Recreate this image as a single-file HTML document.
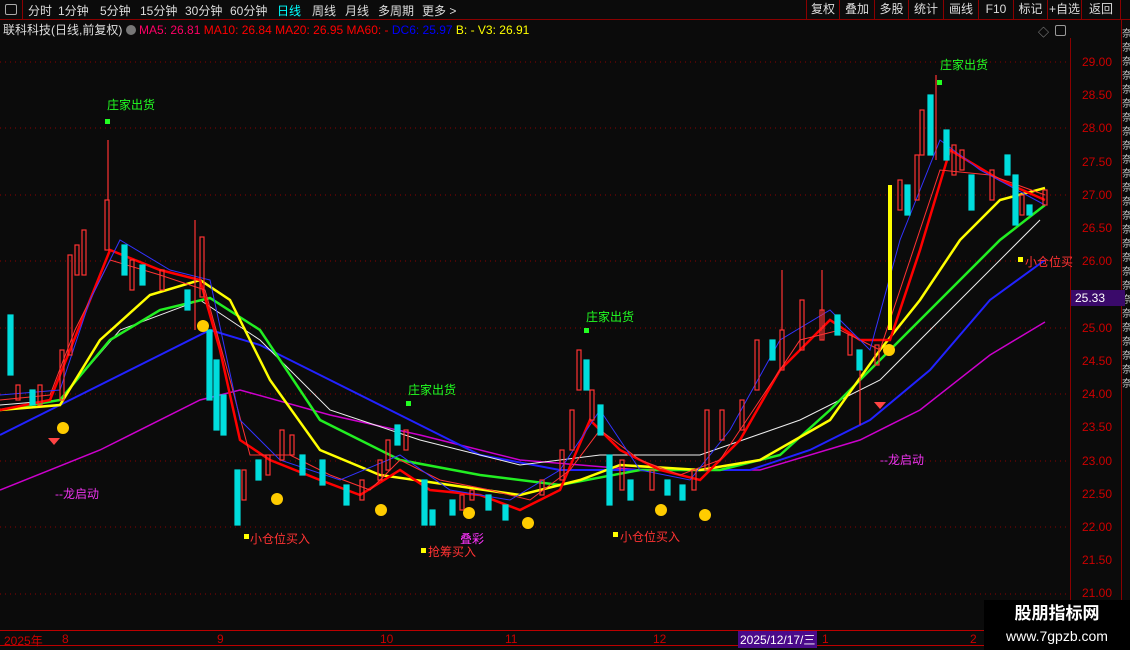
<!DOCTYPE html><html><head><meta charset="utf-8"><style>
body{margin:0;width:1130px;height:650px;background:#0b0b0b;overflow:hidden;font-family:"Liberation Sans","Noto Sans CJK SC",sans-serif;position:relative}
.top{position:absolute;left:0;top:0;width:1130px;height:19px;border-bottom:1px solid #8b0000;color:#ddd;font-size:12px}
.top span{position:absolute;top:2px}
.rb{position:absolute;top:0;height:19px;border-left:1px solid #8b0000;color:#ddd;font-size:12px;text-align:center;line-height:19px;white-space:nowrap}
.info{position:absolute;top:21px;left:3px;font-size:12px;color:#ddd;white-space:nowrap}
.ax{position:absolute;left:1070px;top:38px;width:1px;height:592px;background:#8b0000}
.p{position:absolute;left:1082px;color:#c00;font-size:12px}
.lbl{position:absolute;font-size:12px;white-space:nowrap}
.xl{position:absolute;top:632px;color:#c00;font-size:12px}
</style></head><body>
<div class="top">
<div style="position:absolute;left:0;top:0;width:22px;height:19px;border-right:1px solid #8b0000"><div style="position:absolute;left:5px;top:4px;width:10px;height:9px;border:1px solid #aaa;border-radius:2px"></div></div>
<span style="left:28px">分时</span><span style="left:58px">1分钟</span><span style="left:100px">5分钟</span><span style="left:140px">15分钟</span><span style="left:185px">30分钟</span><span style="left:230px">60分钟</span><span style="left:277px;color:#0ff">日线</span><span style="left:312px">周线</span><span style="left:345px">月线</span><span style="left:378px">多周期</span><span style="left:422px">更多 &gt;</span>
</div>
<div class="rb" style="left:806px;width:32px">复权</div><div class="rb" style="left:839px;width:34px">叠加</div><div class="rb" style="left:874px;width:33px">多股</div><div class="rb" style="left:908px;width:34px">统计</div><div class="rb" style="left:943px;width:34px">画线</div><div class="rb" style="left:978px;width:34px">F10</div><div class="rb" style="left:1013px;width:33px">标记</div><div class="rb" style="left:1047px;width:33px">+自选</div><div class="rb" style="left:1081px;width:38px;border-right:1px solid #8b0000">返回</div>
<div class="info">联科科技(日线,前复权) <span style="display:inline-block;width:10px;height:10px;border-radius:50%;background:#777;vertical-align:-1px"></span> <span style="color:#f06">MA5: 26.81</span> <span style="color:#f00">MA10: 26.84</span> <span style="color:#f00">MA20: 26.95</span> <span style="color:#f00">MA60: -</span> <span style="color:#00f">DC6: 25.97</span> <span style="color:#ff0">B: - V3: 26.91</span></div>
<div style="position:absolute;left:1038px;top:24px;color:#999;font-size:11px">◇</div>
<div style="position:absolute;left:1055px;top:25px;width:9px;height:9px;border:1px solid #999;border-radius:2px"></div>
<div class="ax"></div>
<div style="position:absolute;left:1121px;top:19px;width:1px;height:611px;background:#8b0000"></div>
<div style="position:absolute;left:1122px;top:28px;width:8px;height:400px;color:#ccc;font-size:10px;line-height:14px;overflow:hidden">奈奈奈奈奈奈奈奈奈奈奈奈奈奈奈奈奈奈奈奈奈奈奈奈奈奈</div>
<div class="p" style="top:55px">29.00</div><div class="p" style="top:88px">28.50</div><div class="p" style="top:121px">28.00</div><div class="p" style="top:155px">27.50</div><div class="p" style="top:188px">27.00</div><div class="p" style="top:221px">26.50</div><div class="p" style="top:254px">26.00</div><div class="p" style="top:321px">25.00</div><div class="p" style="top:354px">24.50</div><div class="p" style="top:387px">24.00</div><div class="p" style="top:420px">23.50</div><div class="p" style="top:454px">23.00</div><div class="p" style="top:487px">22.50</div><div class="p" style="top:520px">22.00</div><div class="p" style="top:553px">21.50</div><div class="p" style="top:586px">21.00</div>
<div style="position:absolute;left:1071px;top:290px;width:50px;height:16px;background:#3a0a6a;color:#fff;font-size:12px;line-height:16px;padding-left:4px">25.33</div>
<svg width="1070" height="650" style="position:absolute;left:0;top:0" fill="none">
<g stroke="#8b0000" stroke-dasharray="1 4"><line x1="0" y1="62" x2="1070" y2="62"/><line x1="0" y1="128" x2="1070" y2="128"/><line x1="0" y1="195" x2="1070" y2="195"/><line x1="0" y1="261" x2="1070" y2="261"/><line x1="0" y1="328" x2="1070" y2="328"/><line x1="0" y1="394" x2="1070" y2="394"/><line x1="0" y1="461" x2="1070" y2="461"/><line x1="0" y1="527" x2="1070" y2="527"/><line x1="0" y1="594" x2="1070" y2="594"/></g>
<g stroke-width="1.5">
<polyline stroke="#c0c" points="0,490 100,450 200,400 240,390 330,415 420,435 520,460 640,470 760,470 860,440 920,410 990,355 1045,322"/>
<polyline stroke="#22f" stroke-width="2" points="0,435 60,405 110,380 160,355 210,330 260,345 330,380 410,420 480,455 560,470 650,470 750,470 810,450 870,420 930,370 990,300 1045,260"/>
<polyline stroke="#eee" stroke-width="1" points="0,405 60,400 120,330 200,300 260,340 330,410 420,440 520,465 600,455 700,455 800,420 880,380 960,300 1040,220"/>
<polyline stroke="#2e2" stroke-width="2.5" points="0,410 60,400 110,340 160,310 210,298 260,330 320,420 400,460 480,475 560,485 640,470 720,470 780,455 830,410 880,360 940,300 1000,240 1045,205"/>
<polyline stroke="#ff0" stroke-width="2.5" points="0,410 60,405 100,340 150,295 200,280 230,300 270,380 320,450 380,475 450,485 520,495 580,480 620,465 700,470 760,460 830,420 880,350 920,300 960,240 1000,200 1045,188"/>
<polyline stroke="#f00" stroke-width="2.5" points="0,410 50,400 70,350 110,250 160,270 200,280 220,350 240,440 270,460 320,480 360,495 400,470 430,490 480,495 520,510 560,490 590,420 620,450 660,470 700,480 740,440 780,370 830,320 860,340 890,340 920,250 950,150 1000,180 1045,200"/>
<polyline stroke="#f33" stroke-width="1" points="0,400 50,395 75,330 110,260 160,275 205,290 230,380 250,455 290,455 330,475 370,490 400,460 440,480 490,490 530,500 570,470 600,430 640,460 680,475 720,460 760,400 800,340 840,330 880,350 910,260 940,170 990,175 1045,195"/>
<polyline stroke="#33f" stroke-width="1" points="0,395 60,390 90,300 120,240 170,270 210,280 240,420 280,460 340,480 400,455 450,490 510,500 560,470 600,410 640,470 690,480 730,430 780,340 830,310 870,350 900,240 940,140 980,170 1045,205"/>
<line x1="890" y1="185" x2="890" y2="330" stroke="#ff0" stroke-width="4"/>
</g>
<g stroke-width="1.2">
<g fill="#0dd" stroke="#0dd">
<rect x="8" y="315" width="5" height="60"/><rect x="30" y="390" width="5" height="15"/><rect x="122" y="245" width="5" height="30"/><rect x="140" y="265" width="5" height="20"/><rect x="185" y="290" width="5" height="20"/><rect x="207" y="330" width="5" height="70"/><rect x="214" y="360" width="5" height="70"/><rect x="221" y="395" width="5" height="40"/><rect x="235" y="470" width="5" height="55"/><rect x="256" y="460" width="5" height="20"/><rect x="300" y="455" width="5" height="20"/><rect x="320" y="460" width="5" height="25"/><rect x="344" y="485" width="5" height="20"/><rect x="395" y="425" width="5" height="20"/><rect x="422" y="480" width="5" height="45"/><rect x="430" y="510" width="5" height="15"/><rect x="450" y="500" width="5" height="15"/><rect x="486" y="495" width="5" height="15"/><rect x="503" y="505" width="5" height="15"/><rect x="584" y="360" width="5" height="30"/><rect x="598" y="405" width="5" height="30"/><rect x="607" y="455" width="5" height="50"/><rect x="628" y="480" width="5" height="20"/><rect x="665" y="480" width="5" height="15"/><rect x="680" y="485" width="5" height="15"/><rect x="770" y="340" width="5" height="20"/><rect x="835" y="315" width="5" height="20"/><rect x="857" y="350" width="5" height="20"/><rect x="905" y="185" width="5" height="30"/><rect x="928" y="95" width="5" height="60"/><rect x="944" y="130" width="5" height="30"/><rect x="969" y="175" width="5" height="35"/><rect x="1005" y="155" width="5" height="20"/><rect x="1013" y="175" width="5" height="50"/><rect x="1027" y="205" width="5" height="10"/>
</g>
<g stroke="#f33">
<rect x="16" y="385" width="4" height="15"/><rect x="38" y="385" width="4" height="20"/><rect x="60" y="350" width="4" height="50"/><rect x="68" y="255" width="4" height="100"/><rect x="75" y="245" width="4" height="30"/><rect x="82" y="230" width="4" height="45"/><rect x="105" y="200" width="4" height="50"/><rect x="130" y="260" width="4" height="30"/><rect x="160" y="270" width="4" height="20"/><rect x="200" y="237" width="4" height="60"/><rect x="242" y="470" width="4" height="30"/><rect x="266" y="455" width="4" height="20"/><rect x="280" y="430" width="4" height="30"/><rect x="290" y="435" width="4" height="20"/><rect x="360" y="480" width="4" height="20"/><rect x="378" y="460" width="4" height="20"/><rect x="386" y="440" width="4" height="30"/><rect x="404" y="430" width="4" height="20"/><rect x="460" y="495" width="4" height="15"/><rect x="470" y="490" width="4" height="10"/><rect x="540" y="480" width="4" height="15"/><rect x="560" y="450" width="4" height="30"/><rect x="570" y="410" width="4" height="40"/><rect x="577" y="350" width="4" height="40"/><rect x="590" y="390" width="4" height="30"/><rect x="620" y="460" width="4" height="30"/><rect x="650" y="470" width="4" height="20"/><rect x="692" y="470" width="4" height="20"/><rect x="705" y="410" width="4" height="60"/><rect x="720" y="410" width="4" height="30"/><rect x="740" y="400" width="4" height="30"/><rect x="755" y="340" width="4" height="50"/><rect x="780" y="330" width="4" height="40"/><rect x="800" y="300" width="4" height="50"/><rect x="820" y="310" width="4" height="30"/><rect x="848" y="335" width="4" height="20"/><rect x="875" y="345" width="4" height="20"/><rect x="898" y="180" width="4" height="30"/><rect x="915" y="155" width="4" height="45"/><rect x="920" y="110" width="4" height="45"/><rect x="952" y="145" width="4" height="30"/><rect x="960" y="150" width="4" height="20"/><rect x="990" y="170" width="4" height="30"/><rect x="1020" y="195" width="4" height="20"/><rect x="1043" y="190" width="4" height="15"/>
</g>
<g stroke="#f33"><line x1="108" y1="140" x2="108" y2="200"/><line x1="195" y1="220" x2="195" y2="330"/><line x1="936" y1="75" x2="936" y2="160"/><line x1="822" y1="270" x2="822" y2="340"/><line x1="782" y1="270" x2="782" y2="330"/><line x1="860" y1="370" x2="860" y2="425"/></g>
</g>
<g fill="#fc0"><circle cx="63" cy="428" r="6"/><circle cx="203" cy="326" r="6"/><circle cx="277" cy="499" r="6"/><circle cx="381" cy="510" r="6"/><circle cx="469" cy="513" r="6"/><circle cx="528" cy="523" r="6"/><circle cx="661" cy="510" r="6"/><circle cx="705" cy="515" r="6"/><circle cx="889" cy="350" r="6"/></g>
<path d="M48,438 h12 l-6,7z M874,402 h12 l-6,7z" fill="#f44"/>
<g fill="#2f2"><rect x="105" y="119" width="5" height="5"/><rect x="937" y="80" width="5" height="5"/><rect x="584" y="328" width="5" height="5"/><rect x="406" y="401" width="5" height="5"/></g>
<g fill="#ff0"><rect x="244" y="534" width="5" height="5"/><rect x="613" y="532" width="5" height="5"/><rect x="1018" y="257" width="5" height="5"/><rect x="421" y="548" width="5" height="5"/></g>
</svg>
<div class="lbl" style="left:107px;top:96px;color:#2f2">庄家出货</div><div class="lbl" style="left:940px;top:56px;color:#2f2">庄家出货</div><div class="lbl" style="left:586px;top:308px;color:#2f2">庄家出货</div><div class="lbl" style="left:408px;top:381px;color:#2f2">庄家出货</div>
<div class="lbl" style="left:250px;top:530px;color:#f33">小仓位买入</div><div class="lbl" style="left:620px;top:528px;color:#f33">小仓位买入</div><div class="lbl" style="left:1025px;top:253px;color:#f33">小仓位买</div><div class="lbl" style="left:428px;top:543px;color:#f33">抢筹买入</div><div class="lbl" style="left:460px;top:530px;color:#f3f">叠彩</div>
<div class="lbl" style="left:55px;top:485px;color:#e3e">--龙启动</div><div class="lbl" style="left:880px;top:451px;color:#e3e">--龙启动</div>
<div style="position:absolute;left:0;top:630px;width:1070px;height:1px;background:#b00"></div>
<div style="position:absolute;left:0;top:645px;width:1130px;height:1px;background:#b00"></div>
<div class="xl" style="left:4px">2025年</div><div class="xl" style="left:62px">8</div><div class="xl" style="left:217px">9</div><div class="xl" style="left:380px">10</div><div class="xl" style="left:505px">11</div><div class="xl" style="left:653px">12</div>
<div class="xl" style="left:738px;top:631px;background:#4a0a8a;color:#fff;padding:0 2px">2025/12/17/三</div><div class="xl" style="left:822px">1</div><div class="xl" style="left:970px">2</div>
<div style="position:absolute;left:984px;top:600px;width:146px;height:50px;background:#000;color:#fff;text-align:center">
<div style="font-size:17px;font-weight:bold;line-height:24px;margin-top:2px">股朋指标网</div><div style="font-size:14px;line-height:20px">www.7gpzb.com</div></div>
</body></html>
